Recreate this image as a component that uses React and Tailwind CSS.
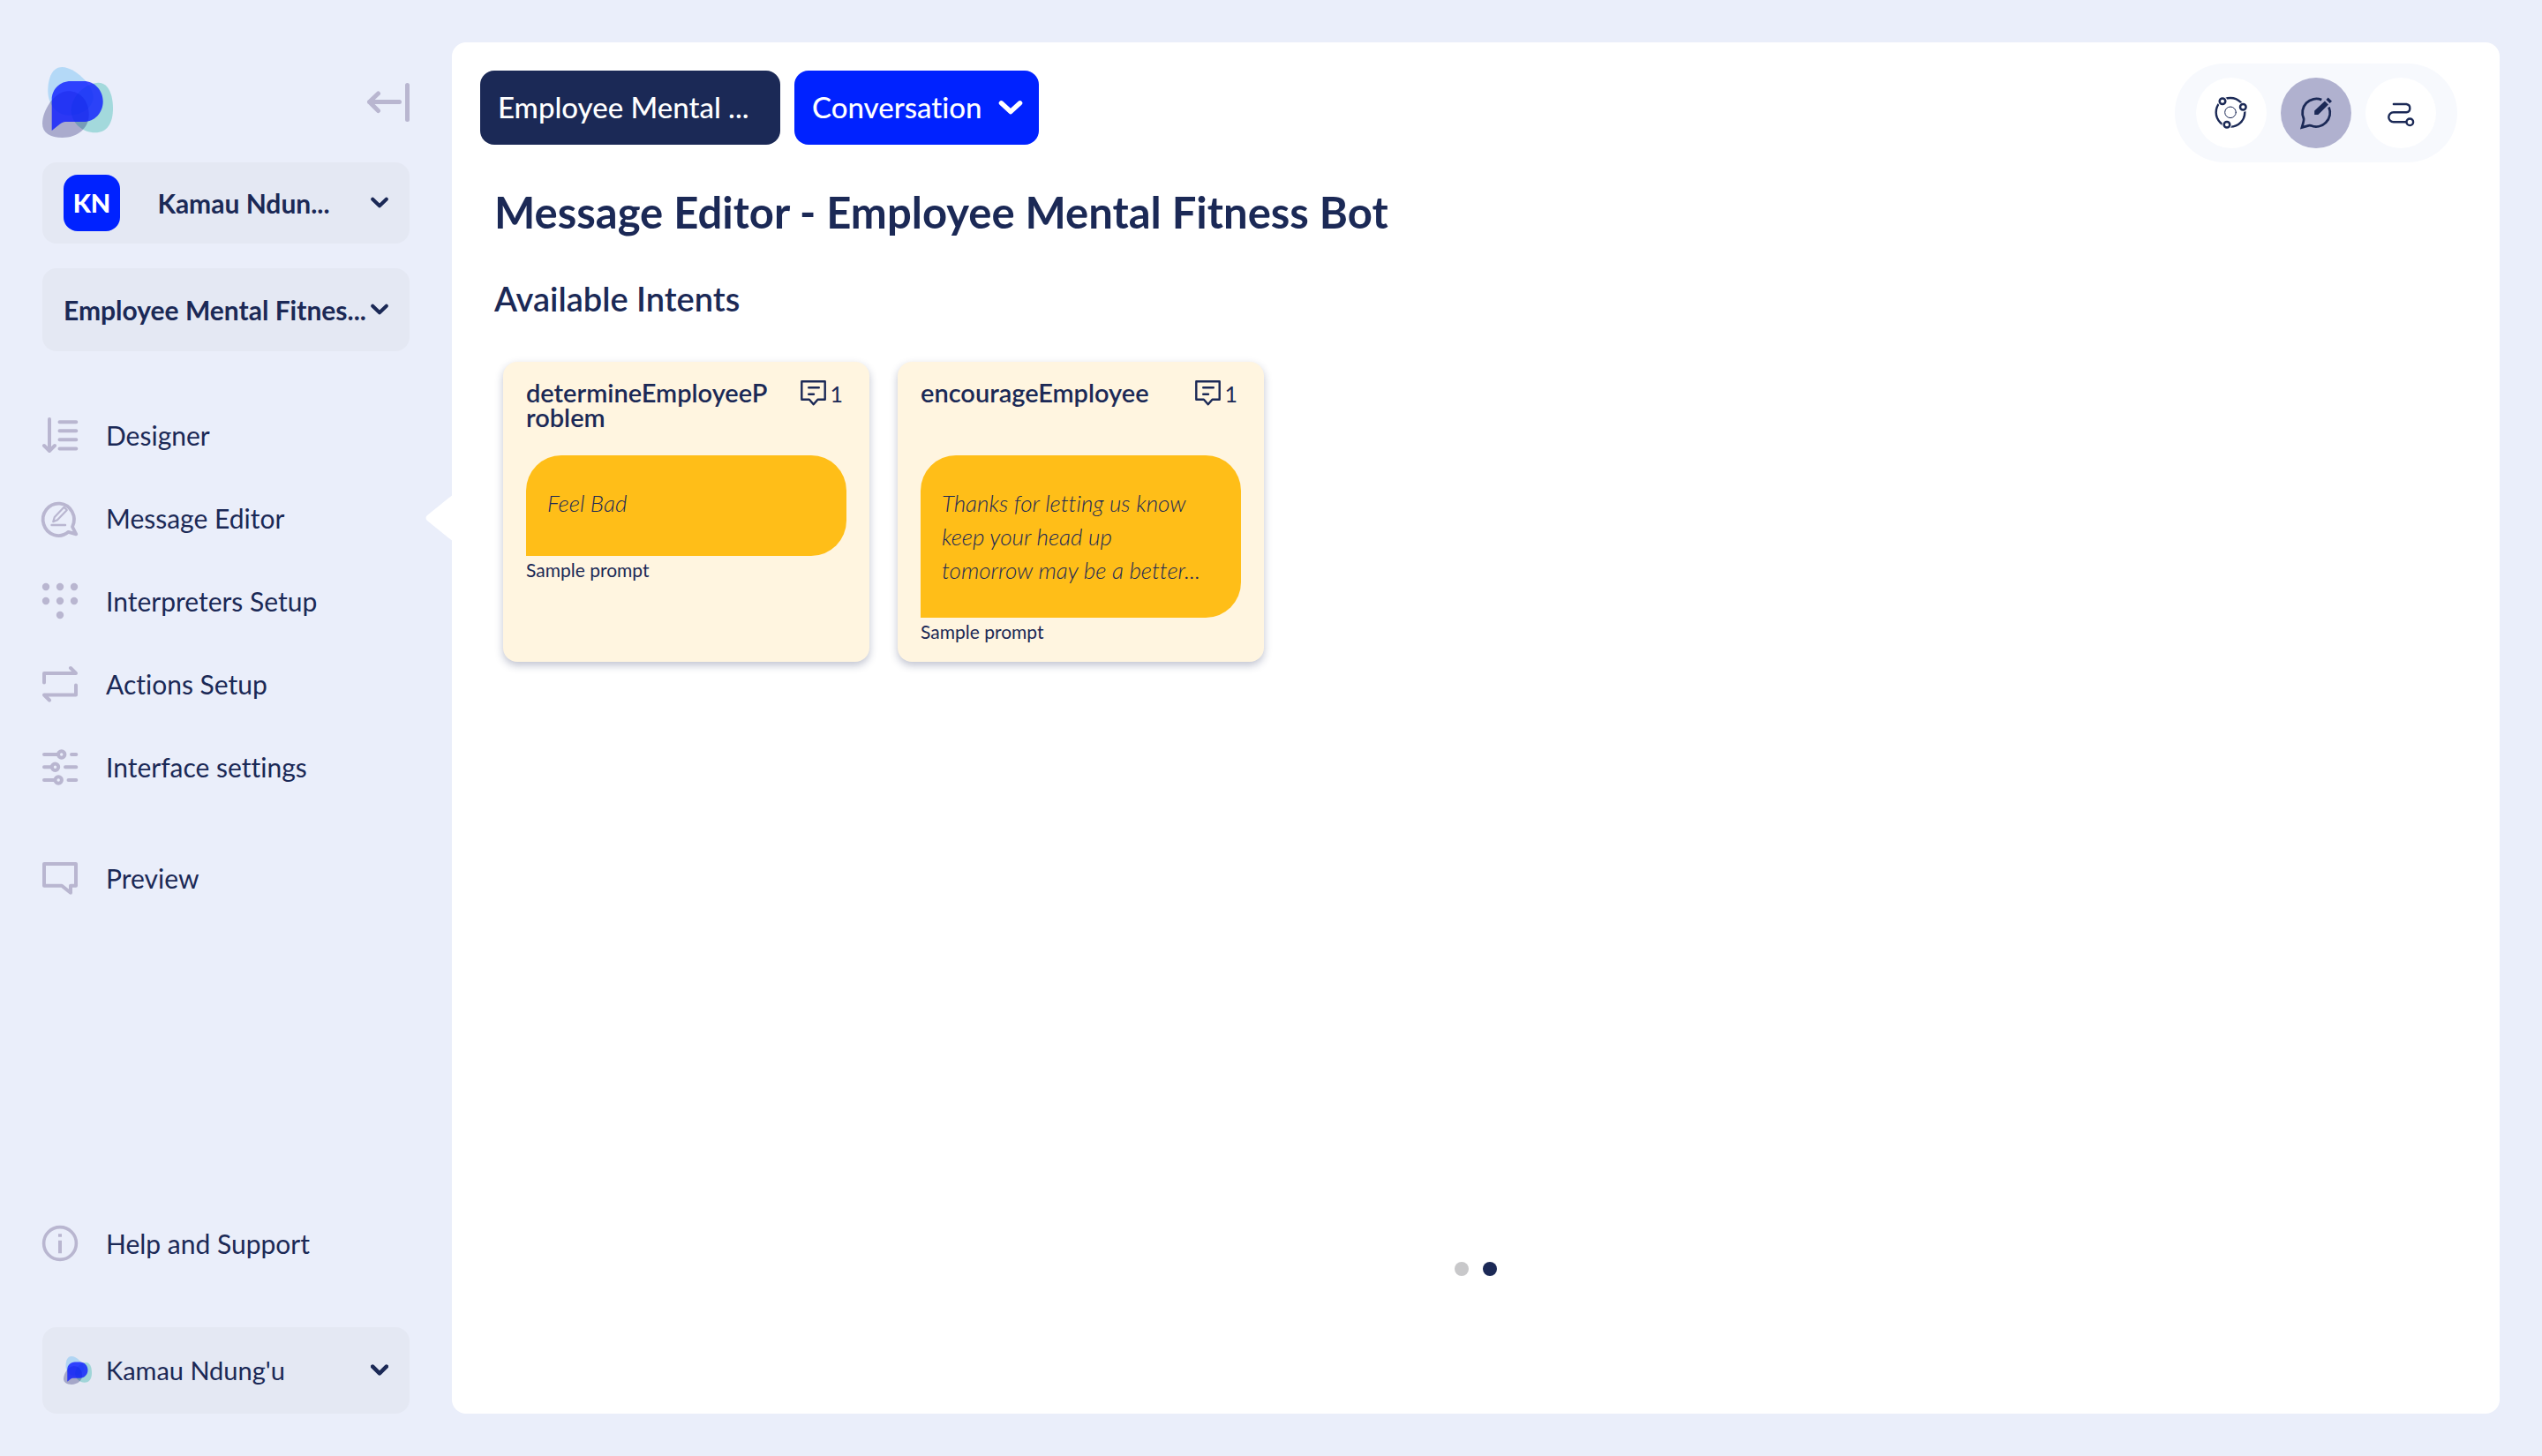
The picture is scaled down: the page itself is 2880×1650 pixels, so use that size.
import React from 'react';

function Logo({ className }) {
  return (
    <svg viewBox="0 0 80 80" className={className} aria-hidden="true">
      <path d="M22.5 0C36 0 57.7 20 57.7 34C57.7 46 44 54.7 30 54.7C16 54.7 6.3 42 6.3 27C6.3 11 12 0 22.5 0Z" fill="#65baf3" fillOpacity="0.4" />
      <path d="M63.7 17.7C75 17.7 80 32 80 47C80 64 73 74.3 59.7 74.3C46 74.3 32.7 64 32.7 49C32.7 32 50 17.7 63.7 17.7Z" fill="#39baaf" fillOpacity="0.4" />
      <path d="M29.3 27.3C43 27.3 52.7 38 52.7 54C52.7 69 40 80 22.7 80C9 80 0 74.5 0 64C0 50 13 27.3 29.3 27.3Z" fill="#03005a" fillOpacity="0.28" />
      <path d="M10.7 72V37C10.7 25 20 16 32 16H47C59 16 68.7 26 68.7 39C68.7 52 59 62 47 62H26C24 62 22 63 20 64.6Z" fill="#0a19ff" fillOpacity="0.79" />
    </svg>
  );
}

function Chevron({ className, strokeWidth = 4 }) {
  return (
    <svg viewBox="0 0 20 14" className={className} fill="none" stroke="currentColor" strokeWidth={strokeWidth} strokeLinecap="round" strokeLinejoin="round" aria-hidden="true">
      <path d="M2.2 2.7L10 10.3L17.8 2.7" />
    </svg>
  );
}

function NavIcon({ children }) {
  return (
    <svg viewBox="0 0 40 40" className="size-10 shrink-0 overflow-visible text-[#b9b6d0]" fill="none" stroke="currentColor" strokeWidth="4" strokeLinecap="round" strokeLinejoin="round" aria-hidden="true">
      {children}
    </svg>
  );
}

const DOTS = [[4, 4], [20, 4], [36, 4], [4, 20], [20, 20], [36, 20], [20, 36]];

const NAV = [
  {
    label: 'Designer',
    icon: (
      <NavIcon>
        <path d="M8 2V37.5M2 32L8 38L14 32M19.5 5.3H38.3M19.5 15.3H38.3M19.5 25.3H38.3M19.5 35.6H38.3" />
      </NavIcon>
    ),
  },
  {
    label: 'Message Editor',
    active: true,
    icon: (
      <NavIcon>
        <path strokeWidth="3.8" d="M34 30A17.6 18.2 0 1 0 29.5 35.8L38.3 38.3Z" />
        <path strokeWidth="2.2" d="M24.5 7.8L27.8 11L17 22.2L12.2 24.2L13.8 19Z" />
        <path strokeWidth="2.4" d="M10.5 28H26" />
      </NavIcon>
    ),
  },
  {
    label: 'Interpreters Setup',
    icon: (
      <NavIcon>
        {DOTS.map(([x, y]) => (
          <circle key={`${x}-${y}`} cx={x} cy={y} r="4.2" fill="currentColor" stroke="none" />
        ))}
      </NavIcon>
    ),
  },
  {
    label: 'Actions Setup',
    icon: (
      <NavIcon>
        <path d="M2 18.5V8H38L32 2M38 21.5V32.5H2L8 38.5" />
      </NavIcon>
    ),
  },
  {
    label: 'Interface settings',
    icon: (
      <NavIcon>
        <path d="M2 6H17M33 6H38.3M2 20.3H10M26 20.3H38.3M2 35H13M29.5 35H38.3" />
        <circle cx="21.7" cy="6" r="3.7" />
        <circle cx="14.5" cy="20.3" r="3.7" />
        <circle cx="18.2" cy="35" r="3.7" />
      </NavIcon>
    ),
  },
];

function NavItem({ icon, label, active }) {
  return (
    <a href="#" aria-current={active ? 'page' : undefined} className="relative flex h-[94px] items-center gap-8 px-12 text-[30px] leading-10 text-[#1b2956]">
      {icon}
      {label}
      {active && (
        <svg viewBox="0 0 30 52" className="absolute right-0 h-[52px] w-[30px]" fill="#ffffff" aria-hidden="true">
          <path d="M30 0.5L2 23Q-1 26 2 29L30 51.5Z" />
        </svg>
      )}
    </a>
  );
}

function Sidebar() {
  return (
    <aside className="flex w-[512px] shrink-0 flex-col pt-[76px] pb-12">
      <div className="flex items-center justify-between px-12">
        <Logo className="size-20" />
        <button type="button" aria-label="Collapse sidebar">
          <svg viewBox="0 0 49 44" className="h-11 w-[49px]" fill="none" stroke="#b9b6d0" strokeWidth="5" strokeLinecap="round" strokeLinejoin="round" aria-hidden="true">
            <path d="M3.5 21.5H37.5M13.5 12L3.5 21.5L13.5 31.5M46.5 2.5V41.5" />
          </svg>
        </button>
      </div>

      <div className="mt-7 flex flex-col gap-7 px-12">
        <button type="button" className="flex h-[92px] items-center rounded-2xl bg-[#e4e8f3] px-6 text-[30px] font-bold text-[#1b2956]">
          <span className="flex size-16 items-center justify-center rounded-2xl bg-[#0022ff] text-[29px] font-black text-white">KN</span>
          <span className="flex-1 pr-1 text-center">Kamau Ndun...</span>
          <Chevron className="h-3.5 w-5" />
        </button>
        <button type="button" className="flex h-[94px] items-center justify-between rounded-2xl bg-[#e4e8f3] px-6 text-[30px] font-bold whitespace-nowrap text-[#1b2956]">
          Employee Mental Fitnes...
          <Chevron className="h-3.5 w-5 shrink-0" />
        </button>
      </div>

      <nav className="mt-12 flex flex-col">
        {NAV.map((item) => (
          <NavItem key={item.label} {...item} />
        ))}
        <div className="mt-8">
          <NavItem
            label="Preview"
            icon={
              <NavIcon>
                <path d="M2 4H38V28.7H32V36.8L22 28.7H2Z" />
              </NavIcon>
            }
          />
        </div>
      </nav>

      <div className="mt-auto">
        <NavItem
          label="Help and Support"
          icon={
            <NavIcon>
              <circle cx="20" cy="20" r="18.4" strokeWidth="3.6" />
              <path d="M18 9.3h4v3.5h-4zM18 16.8h4v14.4h-4z" fill="currentColor" stroke="none" />
            </NavIcon>
          }
        />
      </div>
      <div className="mt-12 flex flex-col px-12">
        <button type="button" className="flex h-[98px] items-center rounded-2xl bg-[#e4e8f3] px-6 text-[29px] text-[#1b2956]">
          <Logo className="size-8" />
          <span className="ml-4 flex-1 text-left">Kamau Ndung'u</span>
          <Chevron className="h-3.5 w-5" strokeWidth={4.6} />
        </button>
      </div>
    </aside>
  );
}

const TOOLS = [
  {
    label: 'Interpreter network',
    icon: (
      <>
        <circle cx="39" cy="39.3" r="16.3" strokeWidth="2.4" />
        <circle cx="39" cy="39.3" r="6.3" strokeWidth="1" />
        {[[30, 26.7], [53.3, 33.3], [35, 53.3]].map(([x, y]) => (
          <React.Fragment key={x}>
            <circle cx={x} cy={y} r="5.6" fill="#ffffff" stroke="none" />
            <circle cx={x} cy={y} r="3.3" fill="#ffffff" strokeWidth="2.5" />
          </React.Fragment>
        ))}
      </>
    ),
  },
  {
    label: 'Message editor',
    active: true,
    icon: (
      <>
        <path strokeWidth="2.8" strokeLinecap="butt" strokeLinejoin="miter" d="M46.3 25.1A15.8 15.8 0 0 0 26 46.3Q26.6 47.6 24 56.4L31.5 54.3Q33 54 34 54.3A15.8 15.8 0 0 0 54.5 33.5" />
        <path d="M38.2 42V37.6L49.9 26.4L54 30.6L42.4 42Z" fill="currentColor" stroke="none" />
        <path d="M51.4 25L53.7 22.6L58 26.7L55.6 29.1Z" fill="currentColor" stroke="none" />
      </>
    ),
  },
  {
    label: 'Flow',
    icon: (
      <>
        <path strokeWidth="2.4" d="M31.9 30H46.3A4.7 4.7 0 0 1 46.3 39.3H31.8A5.5 5.5 0 0 0 31.8 50.3H46" />
        <circle cx="50.3" cy="50.3" r="3.8" strokeWidth="2.4" />
      </>
    ),
  },
];

function Toolbar() {
  return (
    <div className="flex gap-4 rounded-full bg-[#f7f9fd] px-6 py-4">
      {TOOLS.map(({ label, active, icon }) => (
        <button
          key={label}
          type="button"
          aria-label={label}
          aria-pressed={!!active}
          className={`size-20 rounded-full text-[#1b2956] ${active ? 'bg-[#b0b1cf]' : 'bg-white'}`}
        >
          <svg viewBox="0 0 80 80" className="size-20" fill="none" stroke="currentColor" strokeLinecap="round" strokeLinejoin="round" aria-hidden="true">
            {icon}
          </svg>
        </button>
      ))}
    </div>
  );
}

const INTENTS = [
  { name: 'determineEmployeeProblem', count: 1, prompt: 'Feel Bad' },
  { name: 'encourageEmployee', count: 1, prompt: 'Thanks for letting us know\nkeep your head up\ntomorrow may be a better...' },
];

function IntentCard({ name, count, prompt }) {
  return (
    <article className="w-[415px] rounded-2xl bg-[#fff5e0] px-[26px] pt-[21px] pb-[22px] shadow-[0_4px_10px_rgba(27,41,86,0.28)]">
      <header className="mb-[29px] flex min-h-14 items-start justify-between">
        <h3 className="w-[280px] text-[29px] leading-7 font-semibold break-all">{name}</h3>
        <div className="mr-1 flex items-center gap-1 text-[25px] leading-7">
          <svg viewBox="0 0 29 29" className="size-[29px]" fill="none" stroke="currentColor" strokeWidth="2.4" strokeLinejoin="round" strokeLinecap="round" aria-hidden="true">
            <path d="M1.3 1.3H27.7V21.7H19.5L14.7 27.3L9.9 21.7H1.3Z" />
            <path d="M9.2 8.3H20.8M9.2 15.7H15" />
          </svg>
          {count}
        </div>
      </header>
      <p className="min-h-[114px] rounded-[40px] rounded-bl-none bg-[#ffbe18] px-6 py-[35px] text-[26px] leading-[38px] font-light whitespace-pre italic">
        {prompt}
      </p>
      <p className="mt-1 text-[21px] leading-6">Sample prompt</p>
    </article>
  );
}

export default function App() {
  return (
    <div className="flex min-h-screen bg-[#eaeefa] font-['Lato',sans-serif] text-[#1b2956] [font-variant-ligatures:none]">
      <Sidebar />
      <main className="my-12 mr-12 flex flex-1 flex-col rounded-2xl bg-white pt-6 pb-[156px]">
        <div className="flex items-start justify-between pr-12 pl-8">
          <div className="mt-2 flex gap-4 text-[33px] font-medium text-white">
            <button type="button" className="h-[84px] w-[340px] rounded-2xl bg-[#1b2956] px-5 text-left">
              Employee Mental ...
            </button>
            <button type="button" className="flex h-[84px] items-center gap-[18px] rounded-2xl bg-[#0022ff] pr-[18px] pl-5">
              Conversation
              <svg viewBox="0 0 28 18" className="h-[18px] w-7" fill="none" stroke="currentColor" strokeWidth="5.4" strokeLinecap="round" strokeLinejoin="round" aria-hidden="true">
                <path d="M3.4 3.8L14 13.6L24.6 3.8" />
              </svg>
            </button>
          </div>
          <Toolbar />
        </div>
        <section className="px-12">
          <h1 className="mt-7 text-[49px] leading-[56px] font-bold">Message Editor - Employee Mental Fitness Bot</h1>
          <h2 className="mt-12 text-[38px] leading-[44px] font-semibold">Available Intents</h2>
          <div className="mt-[50px] ml-[10px] flex flex-wrap gap-8">
            {INTENTS.map((intent) => (
              <IntentCard key={intent.name} {...intent} />
            ))}
          </div>
        </section>
        <div className="mt-auto flex justify-center gap-4">
          <button type="button" aria-label="Page 1" className="size-4 rounded-full bg-[#c8c8ca]" />
          <button type="button" aria-label="Page 2" aria-current="true" className="size-4 rounded-full bg-[#1b2956]" />
        </div>
      </main>
    </div>
  );
}
